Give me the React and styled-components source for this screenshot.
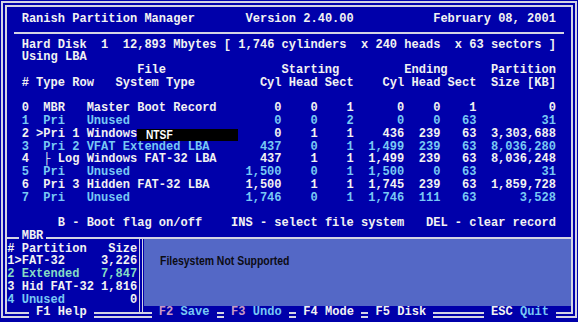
import React from "react";
import styled, { createGlobalStyle } from "styled-components";

const BLUE = "#0000aa";
const PANEL = "#5468c6";
const WHITE = "#f2f2f2";
const CYAN = "#78c8f4";
const GREEN = "#86dcc4";
const PINK = "#c89ac4";
const LINE = "#d4d4e4";
const CELL = 7.224;

const GlobalStyle = createGlobalStyle`
  html, body {
    margin: 0;
    padding: 0;
    background: #e4e4e4;
  }
`;

const Screen = styled.div`
  width: 578px;
  height: 322px;
  box-sizing: border-box;
  padding: 1px 1px 4px 1px;
  background: ${BLUE};
  font-family: "Liberation Mono", "DejaVu Sans Mono", monospace;
  font-size: 12.04px;
  font-weight: bold;
  line-height: 12.75px;
  color: ${WHITE};
  overflow: hidden;
`;

const Frame = styled.div`
  height: 100%;
  box-sizing: border-box;
  border: 6px double ${LINE};
  padding: 6.2px 0 0 0.225px;
`;

const TitleBar = styled.div`
  display: grid;
  grid-template-columns: 31ch 26ch auto;
  padding-left: 2ch;
  height: 12.75px;
`;

const Rule = styled.div`
  height: 12.75px;
  margin: 0 1ch;
  background: linear-gradient(
    transparent 6.3px,
    ${LINE} 6.3px,
    ${LINE} 8.2px,
    transparent 8.2px
  );
`;

const TextLine = styled.div`
  white-space: pre;
  height: 12.75px;
  padding-left: ${(p) => p.$indent || 2}ch;
  color: ${(p) => p.$color || WHITE};
`;

const Blank = styled.div`
  height: 12.75px;
`;

const tableCols = "2ch 7ch 22ch 5ch 5ch 5ch 7ch 5ch 5ch 11ch";

const TableRow = styled.div`
  display: grid;
  grid-template-columns: ${tableCols};
  padding-left: 2ch;
  height: 12.75px;
  white-space: pre;
  color: ${(p) => (p.$alt ? CYAN : WHITE)};
`;

const Cell = styled.span`
  text-align: ${(p) => (p.$right ? "right" : "left")};
  grid-column: ${(p) => (p.$span ? `span ${p.$span}` : "auto")};
  padding-left: ${(p) => p.$pad || 0}ch;
`;

const NameEdit = styled.span`
  display: inline-block;
  vertical-align: top;
  width: ${CELL * 14}px;
  height: 12.5px;
  margin-top: 1px;
  box-sizing: border-box;
  padding-left: 9px;
  background: #000;
  color: #fff;
  font-family: "Liberation Sans", "Arial", sans-serif;
  font-size: 12px;
  line-height: 13px;
`;

const Narrow = styled.span`
  display: inline-block;
  transform: scaleX(${(p) => p.$scale || 0.85});
  transform-origin: left center;
`;

const Lower = styled.div`
  display: flex;
  flex-direction: column;
`;

const LowerHead = styled.div`
  display: flex;
  height: 9.55px;
  flex-shrink: 0;
  align-items: flex-start;
`;

const HLine = styled.div`
  flex: ${(p) => (p.$w ? "none" : 1)};
  width: ${(p) => p.$w || "auto"};
  align-self: stretch;
  background: linear-gradient(
    transparent 7.3px,
    ${LINE} 7.3px,
    ${LINE} 9.3px,
    transparent 9.3px
  );
`;

const Legend = styled.span`
  padding: 0 3px;
  height: 12.75px;
  position: relative;
  background: ${BLUE};
`;

const LowerBody = styled.div`
  display: grid;
  grid-template-columns: 18ch 1ch 1fr;
  height: 72.5px;
  flex-shrink: 0;
`;

const MbrPanel = styled.div`
  padding-top: 3.2px;
`;

const MbrRow = styled.div`
  display: grid;
  grid-template-columns: 1ch 1ch 11ch 5ch;
  height: 12.75px;
  white-space: pre;
  color: ${(p) => p.$color || WHITE};
`;

const Size = styled.span`
  text-align: right;
  color: ${(p) => p.$color || "inherit"};
`;

const Divider = styled.div`
  background: linear-gradient(
    to right,
    transparent 2px,
    ${LINE} 2px,
    ${LINE} 3.4px,
    transparent 3.4px,
    transparent 5px,
    ${LINE} 5px,
    ${LINE} 6.4px,
    transparent 6.4px
  );
`;

const InfoPanel = styled.div`
  align-self: start;
  height: 66.95px;
  background: ${PANEL};
  padding: 15.5px 0 0 15.5px;
  box-sizing: border-box;
  font-family: "Liberation Sans", "Arial", sans-serif;
  font-size: 12px;
  line-height: 12px;
  color: #0c0c14;
`;

const Footer = styled.div`
  display: flex;
  height: 12.75px;
  margin-top: -5.55px;
  white-space: pre;
`;

const Label = styled.span`
  margin-left: ${(p) => p.$gap}ch;
  background: ${BLUE};
`;

const Key = styled.span`
  color: ${(p) => p.$color || WHITE};
`;

const partitions = [
  { n: "0", type: " MBR", sys: "Master Boot Record", v: ["0", "0", "1", "0", "0", "1", "0"] },
  { n: "1", type: " Pri", sys: "Unused", v: ["0", "0", "2", "0", "0", "63", "31"] },
  { n: "2", type: ">Pri 1", sys: "Windows", edit: "NTSF", v: ["0", "1", "1", "436", "239", "63", "3,303,688"] },
  { n: "3", type: " Pri 2", sys: "VFAT Extended LBA", v: ["437", "0", "1", "1,499", "239", "63", "8,036,280"] },
  { n: "4", type: " \u251c Log", sys: "Windows FAT-32 LBA", v: ["437", "1", "1", "1,499", "239", "63", "8,036,248"] },
  { n: "5", type: " Pri", sys: "Unused", v: ["1,500", "0", "1", "1,500", "0", "63", "31"] },
  { n: "6", type: " Pri 3", sys: "Hidden FAT-32 LBA", v: ["1,500", "1", "1", "1,745", "239", "63", "1,859,728"] },
  { n: "7", type: " Pri", sys: "Unused", v: ["1,746", "0", "1", "1,746", "111", "63", "3,528"] },
];

const mbr = [
  { n: "1", mark: ">", name: "FAT-32", size: "3,226" },
  { n: "2", mark: " ", name: "Extended", size: "7,847", color: GREEN },
  { n: "3", mark: " ", name: "Hid FAT-32", size: "1,816" },
  { n: "4", mark: " ", name: "Unused", size: "0", color: CYAN, sizeColor: WHITE },
];

export default function App() {
  return (
    <>
      <GlobalStyle />
      <Screen>
        <Frame>
          <TitleBar>
            <span>Ranish Partition Manager</span>
            <span>Version 2.40.00</span>
            <span>February 08, 2001</span>
          </TitleBar>
          <Rule />
          <TextLine>Hard Disk  1  12,893 Mbytes [ 1,746 cylinders  x 240 heads  x 63 sectors ]</TextLine>
          <TextLine>Using LBA</TextLine>
          <TableRow>
            <Cell />
            <Cell />
            <Cell $pad={7}>File</Cell>
            <Cell $span={3} $pad={5}>Starting</Cell>
            <Cell $span={3} $pad={7}>Ending</Cell>
            <Cell $pad={2}>Partition</Cell>
          </TableRow>
          <TableRow>
            <Cell>#</Cell>
            <Cell>Type Row</Cell>
            <Cell $pad={4}>System Type</Cell>
            <Cell $right>Cyl</Cell>
            <Cell $right>Head</Cell>
            <Cell $right>Sect</Cell>
            <Cell $right>Cyl</Cell>
            <Cell $right>Head</Cell>
            <Cell $right>Sect</Cell>
            <Cell $right>Size [KB]</Cell>
          </TableRow>
          <Blank />
          {partitions.map((p, i) => (
            <TableRow key={p.n} $alt={i % 2 === 1}>
              <Cell>{p.n}</Cell>
              <Cell>{p.type}</Cell>
              <Cell>
                {p.sys}
                {p.edit && (
                  <NameEdit>
                    <Narrow>{p.edit}</Narrow>
                  </NameEdit>
                )}
              </Cell>
              {p.v.map((x, j) => (
                <Cell key={j} $right>
                  {x}
                </Cell>
              ))}
            </TableRow>
          ))}
          <Blank />
          <TextLine $indent={7}>B - Boot flag on/off    INS - select file system   DEL - clear record</TextLine>
          <Lower>
            <LowerHead>
              <HLine $w="calc(2ch - 3px)" />
              <Legend>MBR</Legend>
              <HLine />
            </LowerHead>
            <LowerBody>
              <MbrPanel>
                <MbrRow>
                  <span>#</span>
                  <span />
                  <span>Partition</span>
                  <Size>Size</Size>
                </MbrRow>
                {mbr.map((m) => (
                  <MbrRow key={m.n} $color={m.color}>
                    <span>{m.n}</span>
                    <span>{m.mark}</span>
                    <span>{m.name}</span>
                    <Size $color={m.sizeColor}>{m.size}</Size>
                  </MbrRow>
                ))}
              </MbrPanel>
              <Divider />
              <InfoPanel>
                <Narrow $scale={0.87}>Filesystem Not Supported</Narrow>
              </InfoPanel>
            </LowerBody>
          </Lower>
          <Footer>
            <Label $gap={3}> F1 Help </Label>
            <Label $gap={8}>
              {" "}
              <Key $color={PINK}>F2</Key> <Key $color={CYAN}>Save</Key>{" "}
            </Label>
            <Label $gap={1}>
              {" "}
              <Key $color={PINK}>F3</Key> <Key $color={CYAN}>Undo</Key>{" "}
            </Label>
            <Label $gap={1}> F4 Mode </Label>
            <Label $gap={1}> F5 Disk </Label>
            <Label $gap={7}>
              {" "}ESC <Key $color={CYAN}>Quit</Key>{" "}
            </Label>
          </Footer>
        </Frame>
      </Screen>
    </>
  );
}
